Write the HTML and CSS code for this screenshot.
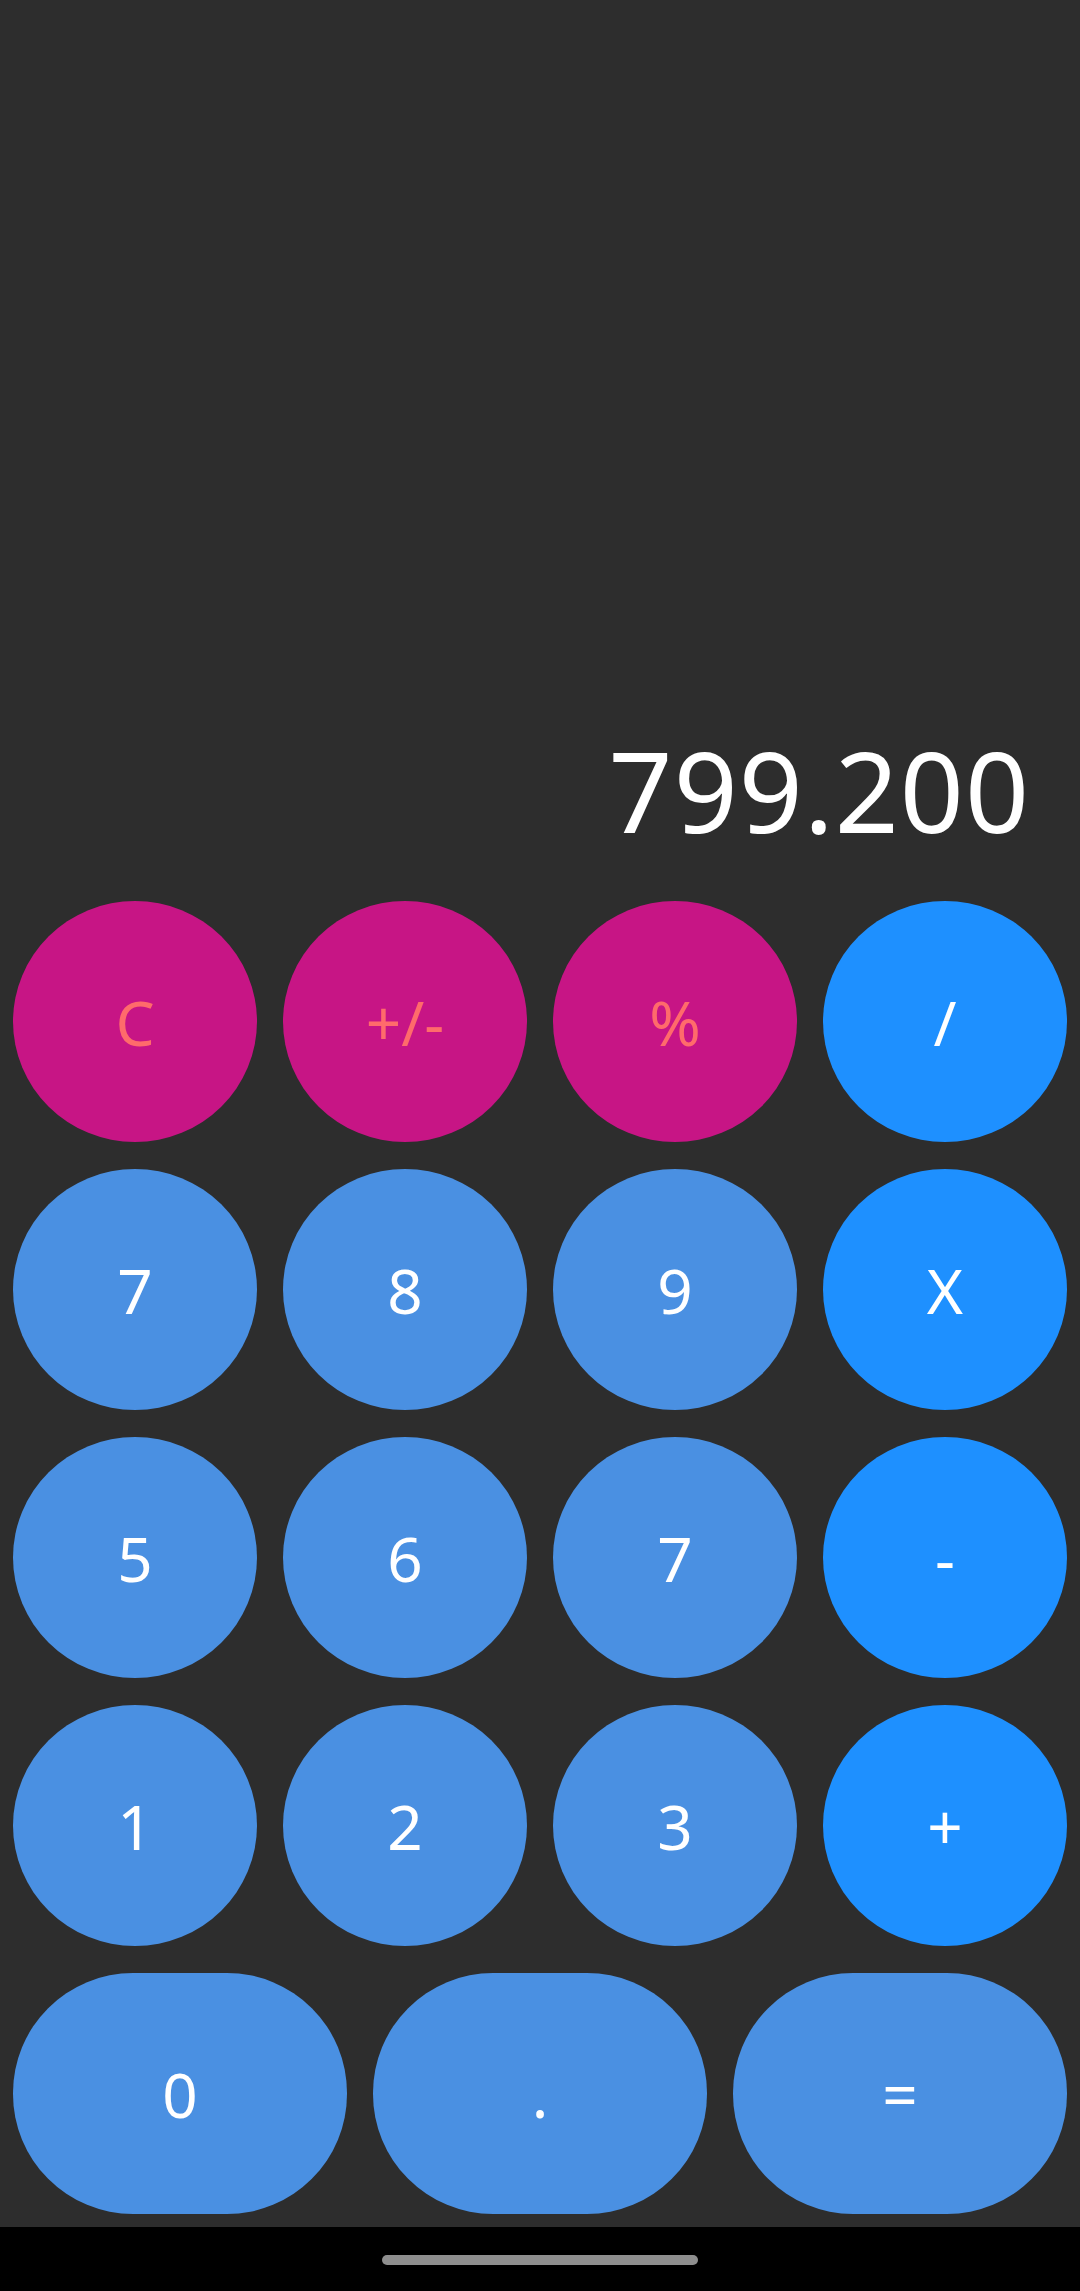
FILE: index.html
```html
<!DOCTYPE html>
<html>
<head>
<meta charset="utf-8">
<link rel="stylesheet" href="styles.css">
</head>
<body>
<div class="app">
  <div class="display"><span class="value">799.200</span></div>
  <div class="keypad">
    <div class="row">
      <div class="key fn">C</div>
      <div class="key fn">+/-</div>
      <div class="key fn">%</div>
      <div class="key op">/</div>
    </div>
    <div class="row">
      <div class="key num">7</div>
      <div class="key num">8</div>
      <div class="key num">9</div>
      <div class="key op">X</div>
    </div>
    <div class="row">
      <div class="key num">5</div>
      <div class="key num">6</div>
      <div class="key num">7</div>
      <div class="key op">-</div>
    </div>
    <div class="row">
      <div class="key num">1</div>
      <div class="key num">2</div>
      <div class="key num">3</div>
      <div class="key op">+</div>
    </div>
    <div class="row">
      <div class="key num wide">0</div>
      <div class="key num wide">.</div>
      <div class="key num wide">=</div>
    </div>
  </div>
  <div class="navbar"><div class="handle"></div></div>
</div>
</body>
</html>
```
FILE: styles.css
```css
html, body {
  margin: 0;
  padding: 0;
  background: #2d2d2d;
}
.app {
  width: 1080px;
  height: 2291px;
  display: flex;
  flex-direction: column;
  font-family: "Noto Sans", "Open Sans", sans-serif;
}
.display {
  flex: 1;
  display: flex;
  justify-content: flex-end;
  align-items: flex-end;
  padding: 0 50px 55px 0;
}
.value {
  color: #ffffff;
  font-size: 112px;
  line-height: 1;
  letter-spacing: 1px;
}
.keypad {
  display: flex;
  flex-direction: column;
  gap: 27px;
  padding: 0 13px 13px 13px;
}
.row {
  display: flex;
  gap: 26px;
}
.key {
  flex: 1;
  height: 241px;
  border-radius: 50%;
  display: flex;
  align-items: center;
  justify-content: center;
  color: #ffffff;
  font-size: 62px;
  line-height: 1;
}
.key.wide {
  border-radius: 120px;
}
.fn {
  background: #c71585;
  color: #ff6b6b;
}
.num {
  background: #4a90e2;
}
.op {
  background: #1e90ff;
}
.navbar {
  height: 64px;
  background: #000000;
  display: flex;
  justify-content: center;
  padding-top: 28px;
  box-sizing: border-box;
}
.handle {
  width: 316px;
  height: 10px;
  border-radius: 5px;
  background: #8e8e8e;
}
```
